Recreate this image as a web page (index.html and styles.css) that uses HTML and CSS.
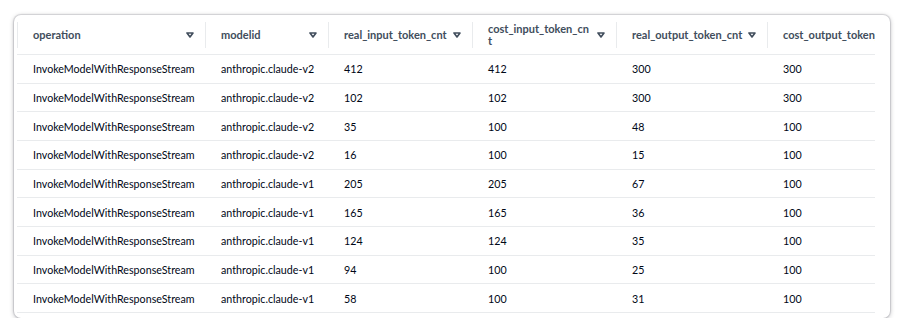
FILE: index.html
```html
<!DOCTYPE html>
<html>
<head>
<meta charset="utf-8">
<link rel="stylesheet" href="styles.css">
</head>
<body>
<div class="card">
  <div class="scroller">
    <div class="table">
      <div class="row head">
        <div class="th"><div class="th-in"><span class="label">operation</span><svg class="caret" viewBox="0 0 8 6"><path d="M1 1h6L4 5z"/></svg></div></div>
        <div class="th"><div class="th-in"><span class="label">modelid</span><svg class="caret" viewBox="0 0 8 6"><path d="M1 1h6L4 5z"/></svg></div></div>
        <div class="th"><div class="th-in"><span class="label">real_input_token_cnt</span><svg class="caret" viewBox="0 0 8 6"><path d="M1 1h6L4 5z"/></svg></div></div>
        <div class="th"><div class="th-in"><span class="label">cost_input_token_cn<br>t</span><svg class="caret" viewBox="0 0 8 6"><path d="M1 1h6L4 5z"/></svg></div></div>
        <div class="th"><div class="th-in"><span class="label">real_output_token_cnt</span><svg class="caret" viewBox="0 0 8 6"><path d="M1 1h6L4 5z"/></svg></div></div>
        <div class="th"><div class="th-in"><span class="label">cost_output_token_cnt</span><svg class="caret" viewBox="0 0 8 6"><path d="M1 1h6L4 5z"/></svg></div></div>
      </div>
      <div class="row"><div class="td">InvokeModelWithResponseStream</div><div class="td">anthropic.claude-v2</div><div class="td">412</div><div class="td">412</div><div class="td">300</div><div class="td">300</div></div>
      <div class="row"><div class="td">InvokeModelWithResponseStream</div><div class="td">anthropic.claude-v2</div><div class="td">102</div><div class="td">102</div><div class="td">300</div><div class="td">300</div></div>
      <div class="row"><div class="td">InvokeModelWithResponseStream</div><div class="td">anthropic.claude-v2</div><div class="td">35</div><div class="td">100</div><div class="td">48</div><div class="td">100</div></div>
      <div class="row"><div class="td">InvokeModelWithResponseStream</div><div class="td">anthropic.claude-v2</div><div class="td">16</div><div class="td">100</div><div class="td">15</div><div class="td">100</div></div>
      <div class="row"><div class="td">InvokeModelWithResponseStream</div><div class="td">anthropic.claude-v1</div><div class="td">205</div><div class="td">205</div><div class="td">67</div><div class="td">100</div></div>
      <div class="row"><div class="td">InvokeModelWithResponseStream</div><div class="td">anthropic.claude-v1</div><div class="td">165</div><div class="td">165</div><div class="td">36</div><div class="td">100</div></div>
      <div class="row"><div class="td">InvokeModelWithResponseStream</div><div class="td">anthropic.claude-v1</div><div class="td">124</div><div class="td">124</div><div class="td">35</div><div class="td">100</div></div>
      <div class="row"><div class="td">InvokeModelWithResponseStream</div><div class="td">anthropic.claude-v1</div><div class="td">94</div><div class="td">100</div><div class="td">25</div><div class="td">100</div></div>
      <div class="row"><div class="td">InvokeModelWithResponseStream</div><div class="td">anthropic.claude-v1</div><div class="td">58</div><div class="td">100</div><div class="td">31</div><div class="td">100</div></div>
    </div>
  </div>
</div>
</body>
</html>
```
FILE: styles.css
```css
html, body {
  margin: 0;
  padding: 0;
  background: #ffffff;
}
body {
  padding: 15px 0 0 14px;
  font-family: Lato, "Open Sans", sans-serif;
  font-size: 10.7px;
  color: #000716;
}
.card {
  width: 876px;
  height: 303px;
  box-sizing: border-box;
  background: #ffffff;
  border-radius: 7px;
  box-shadow: 0 0 1px 1px rgba(0, 7, 22, 0.12), 0 1px 5px rgba(0, 7, 22, 0.28);
  padding: 0 15px 0 3px;
}
.scroller {
  width: 858px;
  overflow: hidden;
}
.table {
  width: 910px;
}
.row {
  display: grid;
  grid-template-columns: 188px 123px 144px 144px 151px 160px;
  height: 28.67px;
  box-sizing: border-box;
  border-bottom: 1px solid #e9ebed;
}
.row.head {
  height: 40px;
}
.th {
  display: flex;
  align-items: center;
}
.th-in {
  flex: 1;
  height: 26px;
  border-left: 1px solid #e9ebed;
  display: flex;
  align-items: center;
  justify-content: space-between;
  padding: 0 11px 0 15px;
  font-size: 11px;
  font-weight: 700;
  color: #414d5c;
  line-height: 12px;
  min-width: 0;
}
.label {
  white-space: nowrap;
}
.caret {
  width: 8px;
  height: 6px;
  flex: none;
  margin-left: 6px;
}
.caret path {
  fill: #ffffff;
  stroke: #414d5c;
  stroke-width: 1.6;
  stroke-linejoin: round;
}
.td {
  display: flex;
  align-items: center;
  padding-left: 16px;
  white-space: nowrap;
}
```
